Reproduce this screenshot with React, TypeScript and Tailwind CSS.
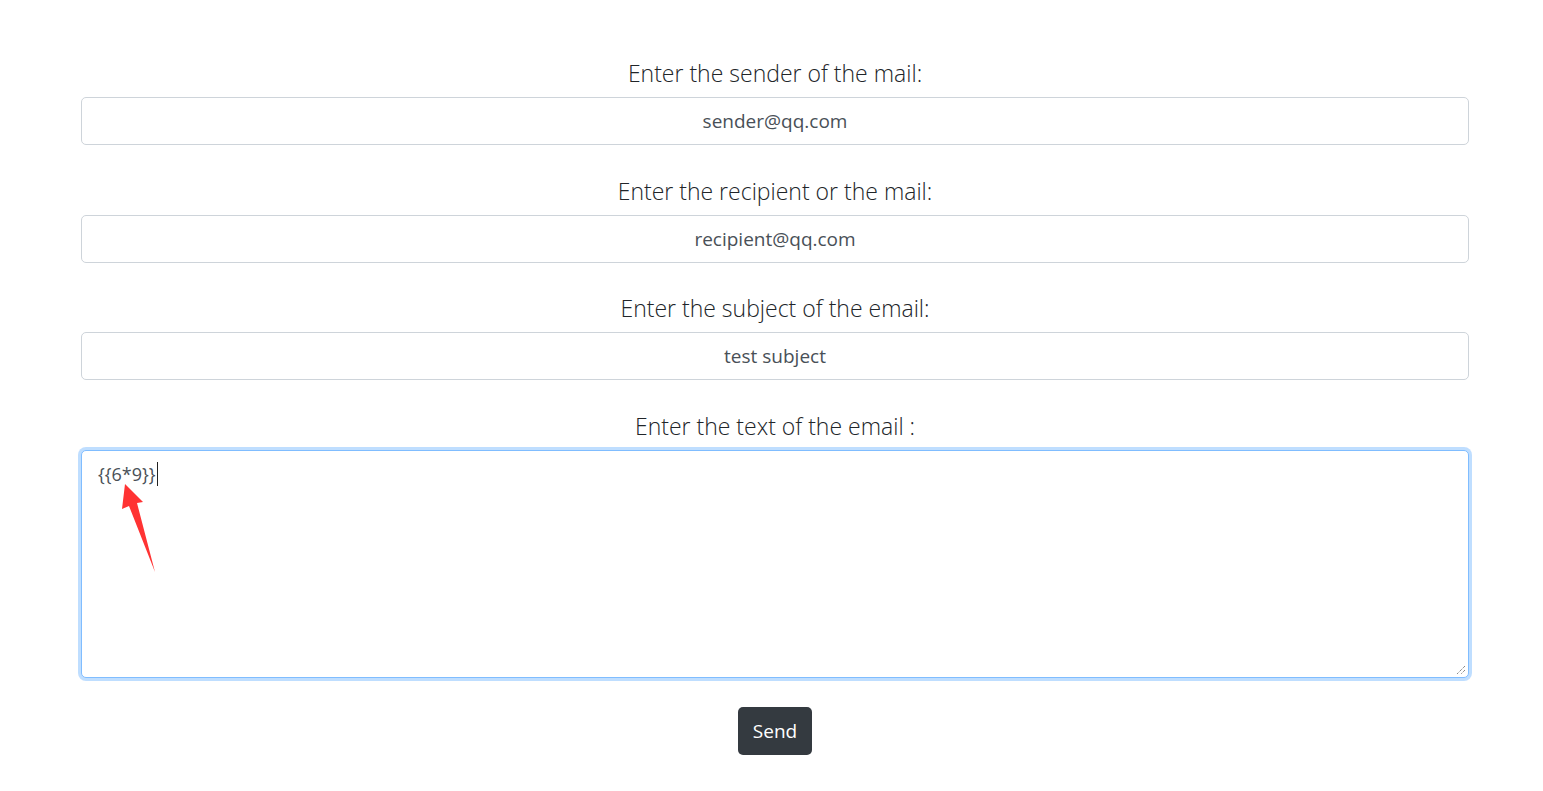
import React from 'react'

const labelCls =
  "block h-[29px] text-center text-[23px] leading-[29px] font-light text-[#212529] mb-[9px]"
const inputCls =
  "block w-full h-[48px] rounded-[5px] border border-[#ced4da] bg-white px-4 text-center text-[19px] text-[#495057] outline-none"

function Field({ label, value }: { label: string; value: string }) {
  return (
    <div className="mb-[31.7px]">
      <label className={labelCls}>{label}</label>
      <input className={inputCls} defaultValue={value} readOnly />
    </div>
  )
}

export default function App() {
  return (
    <div
      className="min-h-screen bg-white pt-[59px] pl-[81px] pr-[74px]"
      style={{ fontFamily: '"Open Sans", "Noto Sans", sans-serif' }}
    >
      <Field label="Enter the sender of the mail:" value="sender@qq.com" />
      <Field label="Enter the recipient or the mail:" value="recipient@qq.com" />
      <Field label="Enter the subject of the email:" value="test subject" />

      <div className="mb-[29px]">
        <label className={labelCls}>Enter the text of the email :</label>
        <div className="relative h-[228px] rounded-[5px] border border-[#80bdff] bg-white px-4 py-2 text-[18px] leading-[30px] text-[#495057] shadow-[0_0_0_3px_rgba(0,123,255,0.25)]">
          <span>{'{{6*9}}'}</span>
          <span className="ml-[1px] inline-block h-[24px] w-px align-[-5px] bg-[#222]" />
          <svg className="absolute bottom-[2px] right-[2px] h-[10px] w-[10px]" viewBox="0 0 10 10">
            <path d="M9 1L1 9M9 5L5 9" stroke="#555" strokeWidth="1" strokeDasharray="1 1" />
          </svg>
          {/* red arrow, coords relative to the textarea's outer corner */}
          <svg className="absolute left-[-1px] top-[-1px] h-[140px] w-[100px]" viewBox="0 0 100 140">
            <polygon points="44,34 62,52 56,53 74,122 48,56 41,59" fill="#ff3333" />
          </svg>
        </div>
      </div>

      <div className="flex justify-center">
        <button className="h-[48px] rounded-[5px] bg-[#343a40] px-[15px] text-[19px] text-white">
          Send
        </button>
      </div>
    </div>
  )
}
